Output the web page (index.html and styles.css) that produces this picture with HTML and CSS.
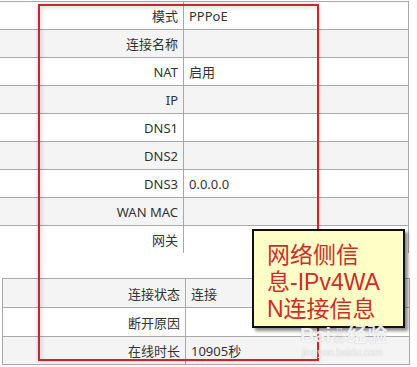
FILE: index.html
```html
<!DOCTYPE html>
<html lang="zh-CN">
<head>
<meta charset="utf-8">
<link rel="stylesheet" href="styles.css">
</head>
<body>
<div class="page">
  <div class="table top">
    <div class="row"><div class="label">模式</div><div class="value">PPPoE</div></div>
    <div class="row alt"><div class="label">连接名称</div><div class="value"></div></div>
    <div class="row"><div class="label">NAT</div><div class="value">启用</div></div>
    <div class="row alt"><div class="label">IP</div><div class="value"></div></div>
    <div class="row"><div class="label">DNS1</div><div class="value"></div></div>
    <div class="row alt"><div class="label">DNS2</div><div class="value"></div></div>
    <div class="row"><div class="label">DNS3</div><div class="value">0.0.0.0</div></div>
    <div class="row alt"><div class="label">WAN MAC</div><div class="value"></div></div>
    <div class="row last"><div class="label">网关</div><div class="value"></div></div>
  </div>
  <div class="table bottom">
    <div class="row alt r1"><div class="label">连接状态</div><div class="value">连接</div></div>
    <div class="row r2"><div class="label">断开原因</div><div class="value"></div></div>
    <div class="row alt r3"><div class="label">在线时长</div><div class="value">10905秒</div></div>
  </div>

  <div class="highlight"></div>
  <div class="callout">网络侧信<br>息-IPv4WA<br>N连接信息</div>
  <div class="watermark"><span class="wm-big">Bai<span class="paw">❀</span>经验</span><span class="wm-small">jingyan.baidu.com</span></div>
</div>
</body>
</html>
```
FILE: styles.css
```css
* { box-sizing: border-box; }
html, body { margin: 0; padding: 0; background: #fff; }
body {
  width: 417px;
  height: 367px;
  overflow: hidden;
  font-family: "Noto Sans", "Noto Sans CJK SC", sans-serif;
  font-size: 13px;
  color: #333;
}
.page { position: relative; width: 417px; height: 367px; }

.table { display: flex; flex-direction: column; }
.table.top {
  margin-top: 1px;
  width: 409px;
  border-top: 1px solid #a9a9a9;
  border-right: 1px solid #a9a9a9;
}
.row {
  display: grid;
  grid-template-columns: 184px 1fr;
  height: 28px;
  border-bottom: 1px solid #a9a9a9;
  background: #fff;
}
.row.alt { background: #f4f4f4; }
.row.last { border-bottom: none; height: 27px; }
.label {
  border-right: 1px solid #a9a9a9;
  text-align: right;
  padding-right: 5px;
  display: flex;
  align-items: center;
  justify-content: flex-end;
}
.value {
  display: flex;
  align-items: center;
  padding-left: 5px;
}

.table.bottom {
  margin-top: 25px;
  margin-left: 2px;
  width: 408px;
  border: 1px solid #a9a9a9;
}
.table.bottom .row { grid-template-columns: 183px 1fr; }
.table.bottom .r1 { height: 29px; }
.table.bottom .r2 { height: 29px; }
.table.bottom .r3 { height: 27px; border-bottom: none; }

.highlight {
  position: absolute;
  left: 38px;
  top: 3px;
  width: 281px;
  height: 357px;
  border: 2px solid #c22a2e;
  box-shadow: 0 0 3px rgba(0,0,0,0.25), inset 2px 2px 4px rgba(0,0,0,0.12);
  pointer-events: none;
}

.callout {
  position: absolute;
  left: 252px;
  top: 228px;
  width: 153px;
  height: 99px;
  background: #fefec6;
  border: 2px solid #111;
  box-shadow: 3px 3px 3px rgba(0,0,0,0.45);
  padding: 11px 0 0 13px;
  font-family: "Liberation Sans", "Noto Sans CJK SC", sans-serif;
  font-size: 23px;
  line-height: 27px;
  color: #c8302c;
  white-space: nowrap;
}

.watermark {
  position: absolute;
  left: 300px;
  top: 324px;
  display: flex;
  flex-direction: column;
  color: rgba(255,255,255,0.85);
  text-shadow: 0 0 1px rgba(120,120,120,0.5);
  font-family: "Liberation Sans", "Noto Sans CJK SC", sans-serif;
}
.wm-big { font-size: 20px; font-weight: bold; line-height: 20px; }
.paw { font-size: 16px; }
.wm-small { font-size: 10px; line-height: 12px; margin-left: 2px; }
```
